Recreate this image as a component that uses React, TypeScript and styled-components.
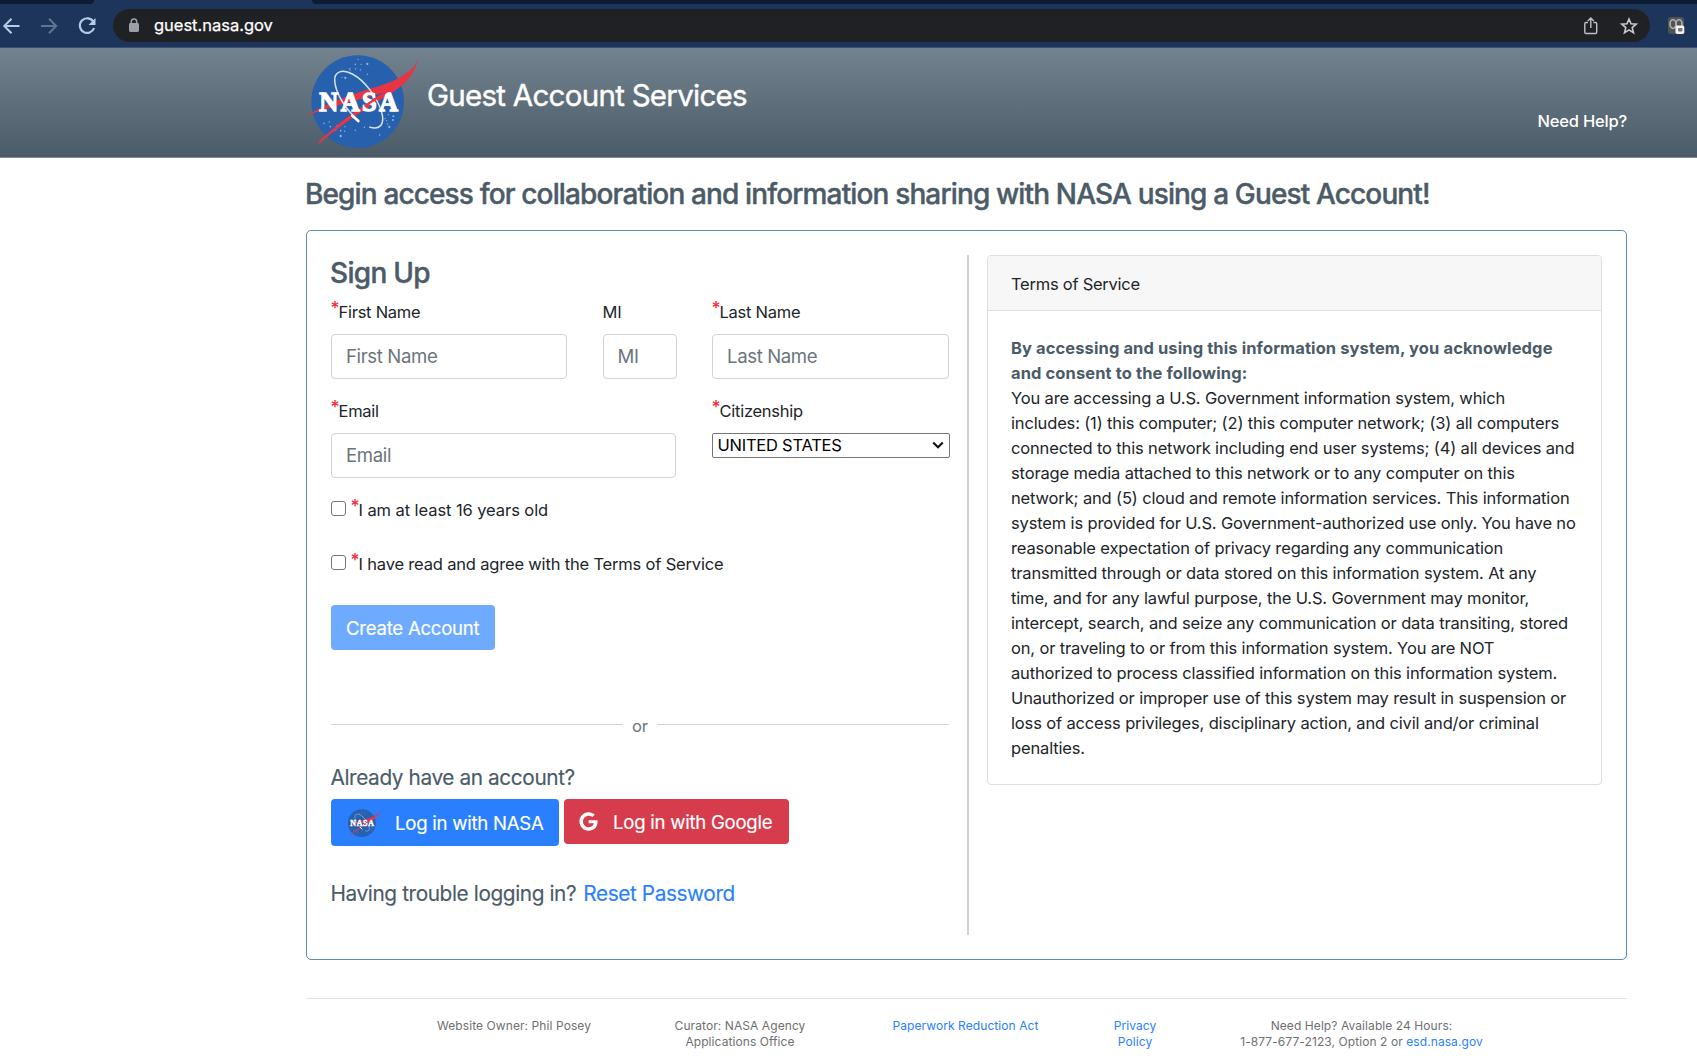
import React from "react";
import styled, { createGlobalStyle } from "styled-components";

const GlobalStyle = createGlobalStyle`
  * { box-sizing: border-box; }
  html, body { margin: 0; padding: 0; }
  body {
    background: #fff;
    color: #212529;
    font-family: Inter, "Liberation Sans", sans-serif;
    font-size: 16.5px;
    line-height: 25px;
    letter-spacing: -0.15px;
    overflow: hidden;
  }
  a { color: #2a7fff; text-decoration: none; }
`;

/* ---------- browser chrome ---------- */

const TabStrip = styled.div`
  display: flex;
  height: 4px;
  background: #1e355b;
  justify-content: space-between;
`;

const IdleTabs = styled.div<{ $side: "left" | "right" }>`
  background: #0b1c33;
  width: ${(p) => (p.$side === "left" ? "94px" : "auto")};
  flex: ${(p) => (p.$side === "left" ? "none" : "1")};
  margin-left: ${(p) => (p.$side === "left" ? "0" : "218px")};
  border-radius: ${(p) => (p.$side === "left" ? "0 0 5px 0" : "0 0 0 6px")};
`;

const Toolbar = styled.div`
  display: flex;
  align-items: center;
  height: 44px;
  padding: 1px 11px 1px 0;
  background: #1e355b;
  border-bottom: 1px solid #3c5170;
`;

const NavButtons = styled.div`
  display: flex;
  align-items: center;
  width: 113px;
  gap: 18px;
  padding-left: 1px;
`;

const AddressBar = styled.div`
  display: flex;
  align-items: center;
  width: 1537px;
  height: 33px;
  border-radius: 17px;
  background: #202124;
  padding: 0 11px 0 15px;
`;

const Url = styled.span`
  flex: 1;
  margin-left: 14px;
  color: #fff;
  font-size: 16.5px;
  letter-spacing: -0.02px;
  -webkit-text-stroke: 0.25px currentColor;
`;

const AddressActions = styled.div`
  display: flex;
  align-items: center;
  gap: 20px;
`;

const ExtensionSlot = styled.div`
  display: flex;
  margin-left: 17px;
`;

/* ---------- site header ---------- */

const SiteHeader = styled.header`
  display: flex;
  height: 110px;
  padding: 0 70px 0 305px;
  background: linear-gradient(#72828e, #4b5b67);
  border-bottom: 1px solid #7c8893;
  color: #fff;
`;

const SiteTitle = styled.h1`
  flex: 1;
  margin: 29px 0 0 2px;
  font-size: 29.5px;
  line-height: 36px;
  font-weight: 400;
  letter-spacing: -0.72px;
  -webkit-text-stroke: 0.4px currentColor;
`;

const HelpLink = styled.span`
  margin-top: 61px;
  font-weight: 500;
  letter-spacing: -0.2px;
`;

/* ---------- page ---------- */

const Page = styled.main`
  width: 1321px;
  margin: 19px 0 0 306px;
`;

const Heading = styled.h2<{ $spacing: string; $drop?: number }>`
  height: 34px;
  margin: 0 0 0 -1px;
  padding-top: ${(p) => p.$drop ?? 0}px;
  color: #4b5b67;
  font-size: 28px;
  line-height: 34px;
  font-weight: 500;
  letter-spacing: ${(p) => p.$spacing};
  white-space: nowrap;
  -webkit-text-stroke: 0.4px currentColor;
`;

const Panel = styled.section`
  display: flex;
  height: 730px;
  margin-top: 19px;
  padding: 24px;
  border: 1px solid #5b8db5;
  border-radius: 5px;
`;

const SignUp = styled.div`
  width: 618px;
`;

const Divider = styled.div`
  width: 2px;
  margin: 0 18px;
  background: #d2d2d2;
`;

const FieldRow = styled.div<{ $cols: string; $top: number }>`
  display: grid;
  grid-template-columns: ${(p) => p.$cols};
  justify-content: space-between;
  margin-top: ${(p) => p.$top}px;
`;

const Field = styled.div`
  display: flex;
  flex-direction: column;
  gap: 9px;
`;

const Label = styled.label`
  display: flex;
  height: 25px;
  letter-spacing: -0.26px;
`;

const Star = styled.span`
  width: 8px;
  margin: -5px 0 0 -0.5px;
  color: #fa2632;
  font-size: 17.5px;
  font-weight: 500;
  letter-spacing: 0;
  &::before { content: "*"; }
`;

const Input = styled.input`
  width: 100%;
  height: 45px;
  padding: 0 14px 1px;
  border: 1px solid #ced4da;
  border-radius: 4px;
  background: #fff;
  font: inherit;
  font-size: 18.6px;
  letter-spacing: -0.38px;
  outline: none;
  &::placeholder { color: #6c757d; opacity: 1; }
`;

const SelectBox = styled.div`
  display: flex;
  align-items: center;
  justify-content: space-between;
  width: 238px;
  height: 25px;
  padding: 0 5px 0 4.5px;
  border: 1px solid #767676;
  border-radius: 2px;
  color: #000;
  font-size: 16.5px;
  letter-spacing: -0.24px;
`;

const CheckRow = styled.div<{ $top: number }>`
  display: flex;
  height: 25px;
  margin-top: ${(p) => p.$top}px;
`;

const Checkbox = styled.input`
  appearance: none;
  width: 15px;
  height: 15px;
  margin: 3px 5px 0 0;
  border: 1px solid #767676;
  border-radius: 3px;
  background: #fff;
`;

const CheckText = styled.span<{ $spacing: string }>`
  letter-spacing: ${(p) => p.$spacing};
`;

const Button = styled.button<{ $bg: string; $width: number; $height: number }>`
  display: flex;
  align-items: center;
  width: ${(p) => p.$width}px;
  height: ${(p) => p.$height}px;
  padding: 0 0 0 15px;
  border: 0;
  border-radius: 4px;
  background: ${(p) => p.$bg};
  color: #fff;
  font-family: inherit;
  font-size: 18.6px;
  letter-spacing: -0.26px;
  white-space: nowrap;
  -webkit-text-stroke: 0.15px currentColor;
`;

const CreateRow = styled.div`
  margin-top: 28px;
`;

const OrRow = styled.div`
  display: flex;
  align-items: center;
  gap: 9px;
  height: 25px;
  margin: 64px 0 0;
  color: #6c757d;
`;

const Rule = styled.span`
  flex: 1;
  height: 1px;
  margin-top: -4px;
  background: #cfd4d6;
`;

const Prompt = styled.p<{ $top: number }>`
  display: flex;
  gap: 7px;
  margin: ${(p) => p.$top}px 0 0 -0.5px;
  color: #4b5b67;
  font-size: 20.8px;
  line-height: 26px;
  letter-spacing: -0.4px;
  -webkit-text-stroke: 0.15px currentColor;
`;

const ButtonRow = styled.div`
  display: flex;
  align-items: flex-start;
  gap: 5px;
  margin-top: 8px;
`;

const ButtonIcon = styled.span<{ $width: number }>`
  display: flex;
  width: ${(p) => p.$width}px;
`;

/* ---------- terms card ---------- */

const Card = styled.article`
  width: 615px;
  height: 530px;
  border: 1px solid #dfdfdf;
  border-radius: 4px;
  overflow: hidden;
`;

const CardHeader = styled.div`
  height: 55px;
  padding: 16px 23px 0;
  background: #f7f7f7;
  border-bottom: 1px solid #dfdfdf;
  letter-spacing: -0.25px;
`;

const CardBody = styled.div`
  padding: 25px 23px 24px;
  white-space: nowrap;
`;

const TermsIntro = styled.strong`
  display: block;
  color: #4b5b67;
  font-weight: 700;
  letter-spacing: 0.1px;
`;

const TermsLine = styled.span`
  display: block;
`;

/* ---------- footer ---------- */

const Footer = styled.footer`
  display: grid;
  grid-template-columns: 226px 226px 225px 114px 339px;
  margin-top: 38px;
  padding: 19px 0 0 95px;
  border-top: 1px solid #e3e3e3;
  color: #6f6f6f;
  font-size: 12px;
  line-height: 15.6px;
  letter-spacing: 0.08px;
  text-align: center;
`;

/* ---------- drawings ---------- */

const STARS: [number, number, number][] = [
  [159, 34, 2], [151, 49, 2.4], [168, 49, 2], [187, 48, 3.4], [152, 62, 2.2], [166, 66, 2], [187, 79, 2.2],
  [135, 66, 2], [111, 88, 2], [121, 90, 3.4], [134, 62, 2], [57, 226, 2.4], [73, 222, 2], [76, 236, 2.4],
  [96, 232, 2], [107, 248, 2.6], [120, 236, 2], [92, 246, 2], [107, 264, 3.6], [119, 250, 2.2], [151, 247, 2.2],
  [178, 238, 2.2], [224, 261, 2.4], [240, 212, 2], [250, 200, 2], [265, 205, 3], [264, 216, 3], [248, 228, 2],
  [253, 237, 3.4], [245, 218, 2], [110, 224, 2],
];

const NasaLogo = ({ width, height }: { width: number; height: number }) => (
  <svg width={width} height={height} viewBox="0 0 360 318">
    <circle cx="158" cy="161" r="139" fill="#2760ad" />
    {STARS.map(([x, y, r], i) => (
      <circle key={i} cx={x} cy={y} r={r} fill="#8fb0df" />
    ))}
    <path
      d="M338 38 C318 76 275 96 224 114 C165 131 70 161 5 204 C70 176 145 160 246 131 C165 178 98 224 40 283 L43 287 C110 229 175 186 240 148 C300 110 325 85 338 38Z"
      fill="#e93443"
    />
    <path
      d="M160 219 C120 180 92 135 89 98 C88 70 112 62 142 78 C180 98 216 148 229 190 C241 228 226 248 193 237"
      fill="none"
      stroke="#d5e1f5"
      strokeWidth="4.5"
    />
    <path d="M142 203 L160 219" stroke="#fff" strokeWidth="8" strokeLinecap="round" />
    <text
      x="43"
      y="188"
      textLength="236"
      lengthAdjust="spacing"
      fontFamily="'Liberation Serif', serif"
      fontWeight="700"
      fontSize="79"
      letterSpacing="0"
      fill="#fff"
      stroke="#fff"
      strokeWidth="4"
    >
      NASA
    </text>
    <path d="M213 147 C240 133 275 112 296 92 C274 119 240 137 181 177 L176 173Z" fill="#e93443" />
  </svg>
);

const BackIcon = ({ dim = false }: { dim?: boolean }) => (
  <svg width="20" height="18" viewBox="0 0 20 18">
    <path
      d={dim ? "M2 9H17M10 1.8L17.2 9L10 16.2" : "M18.5 9H3.5M10.5 1.8L3.3 9L10.5 16.2"}
      fill="none"
      stroke={dim ? "#5f7594" : "#b5cce9"}
      strokeWidth="2"
    />
  </svg>
);

const ReloadIcon = () => (
  <svg width="20" height="20" viewBox="0 0 20 20">
    <path d="M16.2 5.4A7.3 7.3 0 1 0 17.1 12" fill="none" stroke="#b5cce9" strokeWidth="2.2" />
    <path d="M18.5 2V9H11.5Z" fill="#b5cce9" />
  </svg>
);

const LockIcon = () => (
  <svg width="12" height="16" viewBox="0 0 12 16">
    <rect x="1" y="5" width="10" height="9" rx="1.4" fill="#9aa0a6" />
    <path d="M3.3 5.500V3.700a2.700 2.700 0 0 1 5.400 0V5.500" fill="none" stroke="#9aa0a6" strokeWidth="1.5" />
  </svg>
);

const ShareIcon = () => (
  <svg width="16" height="20" viewBox="0 0 16 20">
    <path
      d="M5 6.500H3A1.200 1.200 0 0 0 1.800 7.700V16.300A1.200 1.200 0 0 0 3 17.500H12.500A1.200 1.200 0 0 0 13.700 16.300V7.700A1.200 1.200 0 0 0 12.500 6.500H10.500M7.800 12V2.500M4.800 5L7.800 2L10.800 5"
      fill="none"
      stroke="#bdc1c6"
      strokeWidth="1.4"
    />
  </svg>
);

const StarIcon = () => (
  <svg width="20" height="20" viewBox="0 0 20 20">
    <path
      d="M10 3L12 7.8L17.2 8.2L13.2 11.6L14.5 16.7L10 13.9L5.5 16.7L6.8 11.6L2.8 8.2L8 7.8Z"
      fill="none"
      stroke="#c7cacf"
      strokeWidth="1.6"
    />
  </svg>
);

const ExtensionIcon = () => (
  <svg width="19" height="19" viewBox="0 0 19 19">
    <rect x="1" y="1" width="16" height="17" rx="3" fill="#515254" />
    <ellipse cx="6" cy="8" rx="3" ry="4.3" fill="none" stroke="#aaa" strokeWidth="1.8" />
    <ellipse cx="12" cy="8" rx="3" ry="4.3" fill="none" stroke="#aaa" strokeWidth="1.8" />
    <rect x="8.5" y="9.5" width="8.8" height="8.5" rx="1.8" fill="#f4f4f4" />
    <rect x="11" y="12" width="4.5" height="3.5" rx="1" fill="#777" />
  </svg>
);

const ChevronIcon = () => (
  <svg width="12" height="9" viewBox="0 0 12 9">
    <path d="M1.2 1.5L6 6.2L10.8 1.5" fill="none" stroke="#111" strokeWidth="2.1" />
  </svg>
);

const GoogleIcon = () => (
  <svg width="19" height="19" viewBox="0 0 488 512">
    <path
      fill="#fff"
      d="M488 261.8C488 403.3 391.1 504 248 504 110.800 504 0 393.200 0 256S110.800 8 248 8c66.800 0 123 24.500 166.300 64.900l-67.500 64.900C258.500 52.600 94.300 116.600 94.300 256c0 86.500 69.100 156.600 153.700 156.600 98.200 0 135-70.400 140.800-106.900H248v-85.300h236.100c2.300 12.700 3.900 24.900 3.900 41.400z"
    />
  </svg>
);

const TERMS = [
  "You are accessing a U.S. Government information system, which",
  "includes: (1) this computer; (2) this computer network; (3) all computers",
  "connected to this network including end user systems; (4) all devices and",
  "storage media attached to this network or to any computer on this",
  "network; and (5) cloud and remote information services. This information",
  "system is provided for U.S. Government-authorized use only. You have no",
  "reasonable expectation of privacy regarding any communication",
  "transmitted through or data stored on this information system. At any",
  "time, and for any lawful purpose, the U.S. Government may monitor,",
  "intercept, search, and seize any communication or data transiting, stored",
  "on, or traveling to or from this information system. You are NOT",
  "authorized to process classified information on this information system.",
  "Unauthorized or improper use of this system may result in suspension or",
  "loss of access privileges, disciplinary action, and civil and/or criminal",
  "penalties.",
];

export default function App() {
  return (
    <>
      <GlobalStyle />
      <TabStrip>
        <IdleTabs $side="left" />
        <IdleTabs $side="right" />
      </TabStrip>
      <Toolbar>
        <NavButtons>
          <BackIcon />
          <BackIcon dim />
          <ReloadIcon />
        </NavButtons>
        <AddressBar>
          <LockIcon />
          <Url>guest.nasa.gov</Url>
          <AddressActions>
            <ShareIcon />
            <StarIcon />
          </AddressActions>
        </AddressBar>
        <ExtensionSlot>
          <ExtensionIcon />
        </ExtensionSlot>
      </Toolbar>

      <SiteHeader>
        <NasaLogo width={120} height={106} />
        <SiteTitle>Guest Account Services</SiteTitle>
        <HelpLink>Need Help?</HelpLink>
      </SiteHeader>

      <Page>
        <Heading $spacing="-0.86px">
          Begin access for collaboration and information sharing with NASA using a Guest Account!
        </Heading>

        <Panel>
          <SignUp>
            <Heading $spacing="-0.7px" $drop={1}>Sign Up</Heading>
            <FieldRow $cols="236px 74px 237px" $top={11}>
              <Field>
                <Label><Star />First Name</Label>
                <Input placeholder="First Name" />
              </Field>
              <Field>
                <Label>MI</Label>
                <Input placeholder="MI" />
              </Field>
              <Field>
                <Label><Star />Last Name</Label>
                <Input placeholder="Last Name" />
              </Field>
            </FieldRow>
            <FieldRow $cols="345px 237px" $top={20}>
              <Field>
                <Label><Star />Email</Label>
                <Input placeholder="Email" />
              </Field>
              <Field>
                <Label><Star />Citizenship</Label>
                <SelectBox>UNITED STATES<ChevronIcon /></SelectBox>
              </Field>
            </FieldRow>
            <CheckRow $top={20}>
              <Checkbox type="checkbox" />
              <Star />
              <CheckText $spacing="-0.08px">I am at least 16 years old</CheckText>
            </CheckRow>
            <CheckRow $top={29}>
              <Checkbox type="checkbox" />
              <Star />
              <CheckText $spacing="-0.18px">I have read and agree with the Terms of Service</CheckText>
            </CheckRow>
            <CreateRow>
              <Button $bg="#6eabff" $width={164} $height={45}>Create Account</Button>
            </CreateRow>
            <OrRow><Rule />or<Rule /></OrRow>
            <Prompt $top={26}>Already have an account?</Prompt>
            <ButtonRow>
              <Button $bg="#2a7fff" $width={228} $height={47}>
                <ButtonIcon $width={49}><NasaLogo width={36} height={32} /></ButtonIcon>
                Log in with NASA
              </Button>
              <Button $bg="#d63c4b" $width={225} $height={45}>
                <ButtonIcon $width={34}><GoogleIcon /></ButtonIcon>
                Log in with Google
              </Button>
            </ButtonRow>
            <Prompt $top={35}>
              Having trouble logging in? <a>Reset Password</a>
            </Prompt>
          </SignUp>

          <Divider />

          <Card>
            <CardHeader>Terms of Service</CardHeader>
            <CardBody>
              <TermsIntro>
                By accessing and using this information system, you acknowledge
                <br />
                and consent to the following:
              </TermsIntro>
              {TERMS.map((line) => (
                <TermsLine key={line}>{line}</TermsLine>
              ))}
            </CardBody>
          </Card>
        </Panel>

        <Footer>
          <div>Website Owner: Phil Posey</div>
          <div>Curator: NASA Agency<br />Applications Office</div>
          <div><a>Paperwork Reduction Act</a></div>
          <div><a>Privacy<br />Policy</a></div>
          <div>Need Help? Available 24 Hours:<br />1-877-677-2123, Option 2 or <a>esd.nasa.gov</a></div>
        </Footer>
      </Page>
    </>
  );
}
